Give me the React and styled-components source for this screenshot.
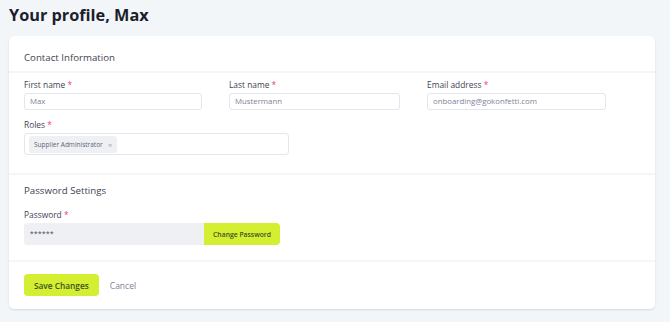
import React from 'react';
import styled, { createGlobalStyle } from 'styled-components';

const GlobalStyle = createGlobalStyle`
  body {
    margin: 0;
    background: #f3f6f9;
    font-family: 'Open Sans', 'Liberation Sans', sans-serif;
  }
`;

const Page = styled.div`
  padding: 5px 15px 13px 9px;
`;

const Title = styled.h1`
  margin: 0;
  height: 31px;
  font-size: 16.3px;
  font-weight: 700;
  color: #1b1e2c;
  line-height: 20px;
`;

const Card = styled.div`
  background: #fff;
  border-radius: 5px;
  box-shadow: 0 1px 2px rgba(180, 190, 210, 0.5);
`;

const Section = styled.div`
  padding: ${p => p.$pad || '14px 15px'};
  border-top: ${p => (p.$first ? 'none' : '2px solid #f5f6f8')};
`;

const SectionTitle = styled.div`
  font-size: 9.7px;
  color: #3f4254;
  line-height: 16px;
`;

const Grid = styled.div`
  display: grid;
  grid-template-columns: 178px 171px 179px;
  column-gap: 27px;
  row-gap: 8px;
`;

const Field = styled.div`
  display: flex;
  flex-direction: column;
  grid-column: ${p => p.$span || 'auto'};
  margin-top: ${p => p.$mt || '0'};
`;

const Label = styled.label`
  font-size: 8.4px;
  font-weight: 500;
  color: #3f4254;
  line-height: 13px;
  margin-bottom: 2px;
  &::after {
    content: ' *';
    color: #f1416c;
  }
`;

const Input = styled.div`
  box-sizing: border-box;
  height: 17px;
  border: 1px solid #e4e6ef;
  border-radius: 3px;
  padding: 0 5px;
  font-size: 7.8px;
  line-height: 15px;
  color: #7e8299;
`;

const TagBox = styled.div`
  box-sizing: border-box;
  width: 265px;
  height: 22px;
  border: 1px solid #e4e6ef;
  border-radius: 3px;
  padding: 0 4px;
  display: flex;
  align-items: center;
`;

const Tag = styled.span`
  display: inline-flex;
  align-items: center;
  gap: 5px;
  height: 17px;
  padding: 0 5px;
  background: #eef0f4;
  border-radius: 3px;
  font-size: 6.5px;
  color: #5e6278;
`;

const Remove = styled.span`
  color: #a1a5b7;
  font-size: 8px;
`;

const Group = styled.div`
  display: flex;
  width: 256px;
  height: 22px;
`;

const PasswordInput = styled.div`
  flex: 1;
  background: #eef0f4;
  border-radius: 3px 0 0 3px;
  padding: 0 6px;
  font-size: 6.5px;
  line-height: 22px;
  color: #3f4254;
  letter-spacing: 0.4px;
`;

const LimeButton = styled.button`
  border: none;
  background: #d4ee32;
  color: #3b5320;
  font-family: inherit;
  font-weight: 600;
  font-size: ${p => (p.$big ? '8.3px' : '6.8px')};
  border-radius: ${p => (p.$big ? '4px' : '0 4px 4px 0')};
  padding: 0 ${p => (p.$big ? '10px' : '9px')};
  height: 22px;
  cursor: pointer;
`;

const Actions = styled.div`
  display: flex;
  align-items: center;
  gap: 11px;
`;

const Cancel = styled.span`
  font-size: 8.5px;
  color: #7e8299;
`;

export default function App() {
  return (
    <>
      <GlobalStyle />
      <Page>
        <Title>Your profile, Max</Title>
        <Card>
          <Section $first $pad="14px 15px 5px">
            <SectionTitle>Contact Information</SectionTitle>
          </Section>
          <Section $pad="5px 15px 18px">
            <Grid>
              <Field>
                <Label>First name</Label>
                <Input>Max</Input>
              </Field>
              <Field>
                <Label>Last name</Label>
                <Input>Mustermann</Input>
              </Field>
              <Field>
                <Label>Email address</Label>
                <Input>onboarding@gokonfetti.com</Input>
              </Field>
              <Field $span="1 / 4">
                <Label>Roles</Label>
                <TagBox>
                  <Tag>
                    Supplier Administrator <Remove>×</Remove>
                  </Tag>
                </TagBox>
              </Field>
            </Grid>
          </Section>
          <Section $pad="8px 15px 15px">
            <SectionTitle>Password Settings</SectionTitle>
            <Field $mt="9px">
              <Label>Password</Label>
              <Group>
                <PasswordInput>******</PasswordInput>
                <LimeButton>Change Password</LimeButton>
              </Group>
            </Field>
          </Section>
          <Section $pad="12px 15px 13px">
            <Actions>
              <LimeButton $big>Save Changes</LimeButton>
              <Cancel>Cancel</Cancel>
            </Actions>
          </Section>
        </Card>
      </Page>
    </>
  );
}
